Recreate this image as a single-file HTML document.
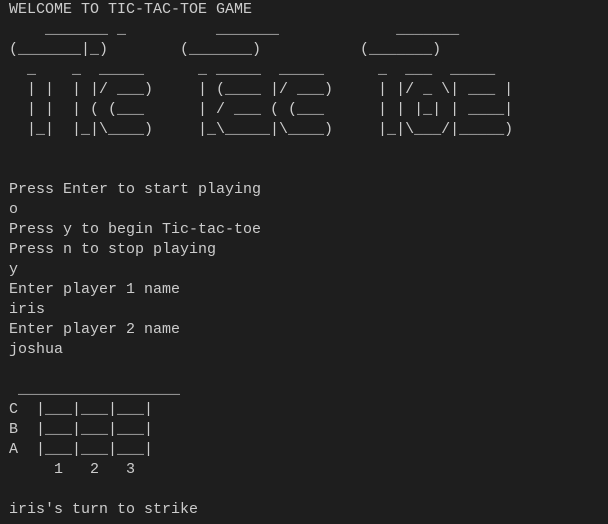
<!DOCTYPE html>
<html><head><meta charset="utf-8"><style>
html,body{margin:0;padding:0;background:#1e1e1e;width:608px;height:524px;overflow:hidden}
pre{margin:0;padding:0 0 0 9px;font-family:"Liberation Mono",monospace;font-size:15px;line-height:20px;color:#cccccc;letter-spacing:0}
</style></head><body><pre>WELCOME TO TIC-TAC-TOE GAME
    _______ _          _______             _______
(_______|_)        (_______)           (_______)
  _    _  _____      _ _____  _____      _  ___  _____
  | |  | |/ ___)     | (____ |/ ___)     | |/ _ \| ___ |
  | |  | ( (___      | / ___ ( (___      | | |_| | ____|
  |_|  |_|\____)     |_\_____|\____)     |_|\___/|_____)


Press Enter to start playing
o
Press y to begin Tic-tac-toe
Press n to stop playing
y
Enter player 1 name
iris
Enter player 2 name
joshua

 __________________
C  |___|___|___|
B  |___|___|___|
A  |___|___|___|
     1   2   3

iris's turn to strike
</pre></body></html>
